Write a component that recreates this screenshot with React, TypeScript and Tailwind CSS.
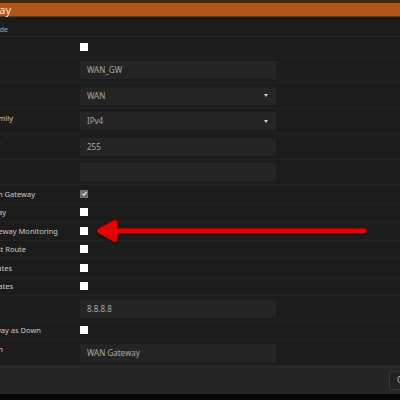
import { useState } from 'react'

type Field =
  | { kind: 'check'; label: string; end: string; checked?: boolean; h?: string }
  | { kind: 'input'; label: string; end: string; value: string }
  | { kind: 'select'; label: string; end: string; value: string }

// `end` is the width of the label box; the label text is right-aligned in it
// and runs off the left edge of the dialog, which is clipped by the viewport.
const fields: Field[] = [
  { kind: 'check', label: 'Disabled', end: 'w-[0px]', h: 'h-[20.5px]' },
  { kind: 'input', label: 'Name', end: 'w-[0px]', value: 'WAN_GW' },
  { kind: 'select', label: 'Interface', end: 'w-[0px]', value: 'WAN' },
  { kind: 'select', label: 'Address Family', end: 'w-[13px]', value: 'IPv4' },
  { kind: 'input', label: 'Priority', end: 'w-[0px]', value: '255' },
  { kind: 'input', label: 'IP Address', end: 'w-[0px]', value: '' },
  { kind: 'check', label: 'Upstream Gateway', end: 'w-[35px]', checked: true },
  { kind: 'check', label: 'Far Gateway', end: 'w-[6px]' },
  { kind: 'check', label: 'Disable Gateway Monitoring', end: 'w-[58px]' },
  { kind: 'check', label: 'Disable Host Route', end: 'w-[26px]' },
  { kind: 'check', label: 'Failover States', end: 'w-[12px]' },
  { kind: 'check', label: 'Failback States', end: 'w-[13px]' },
  { kind: 'input', label: 'Monitor IP', end: 'w-[0px]', value: '8.8.8.8' },
  { kind: 'check', label: 'Mark Gateway as Down', end: 'w-[41px]' },
  { kind: 'input', label: 'Description', end: 'w-[3px]', value: 'WAN Gateway' },
]

function Checkbox({ checked }: { checked?: boolean }) {
  if (checked) {
    return (
      <span className="flex h-[8px] w-[8px] items-center justify-center bg-[#6e6e6e]">
        <svg viewBox="0 0 10 10" className="h-[7px] w-[7px]">
          <path d="M2 5.2 L4.2 7.3 L8 2.8" fill="none" stroke="#e8e8e8" strokeWidth="1.6" />
        </svg>
      </span>
    )
  }
  return <span className="block h-[8px] w-[8px] bg-white" />
}

function Row({ field }: { field: Field }) {
  const isCheck = field.kind === 'check'
  const height = field.kind === 'check' ? field.h ?? 'h-[18.5px]' : 'h-[25.5px]'
  return (
    <div className={`flex border-b border-[#232323] ${height} ${isCheck ? 'items-center' : 'items-start'}`}>
      <div className={`w-[80px] shrink-0 ${isCheck ? '' : 'pt-[4px]'}`}>
        <div className={`flex justify-end whitespace-nowrap text-[7.5px] leading-[10px] text-[#cacaca] ${field.end}`}>
          {field.label}
        </div>
      </div>
      {isCheck ? (
        <Checkbox checked={field.checked} />
      ) : (
        <div className="mt-[3.5px] flex h-[18px] w-[196px] items-center justify-between bg-[#242424] pl-[7px] pr-[8px] text-[8px] text-[#a9a9a9]">
          <span>{field.value}</span>
          {field.kind === 'select' && (
            <span className="h-0 w-0 border-x-[2.5px] border-t-[3px] border-x-transparent border-t-[#d0d0d0]" />
          )}
        </div>
      )}
    </div>
  )
}

export default function App() {
  const [advanced] = useState(false)

  return (
    <div className="relative h-[400px] w-[400px] overflow-hidden bg-[#050505] font-['Noto_Sans',sans-serif]">
      {/* page behind the dialog */}
      <div className="h-[3px] bg-[#3d2b16]" />

      {/* dialog header */}
      <div className="flex h-[14px] items-center border-b border-[#6b3510] bg-[#b0561a]">
        <div className="flex w-[11px] justify-end whitespace-nowrap text-[11px] leading-none text-[#f2e6dc]">
          Edit Gateway
        </div>
      </div>

      {/* dialog body */}
      <div className="bg-[#1c1c1c]">
        <div className="flex h-[20px] items-end border-b border-[#262626] pb-[1px]">
          <div className="flex w-[8px] justify-end whitespace-nowrap text-[7px] leading-[10px] text-[#a8a8a8]">
            {advanced ? 'basic mode' : 'advanced mode'}
          </div>
        </div>
        {fields.map((f) => (
          <Row key={f.label} field={f} />
        ))}
      </div>

      {/* dialog footer */}
      <div className="flex h-[28px] items-center justify-end border-t border-[#2b2b2b] bg-[#252525]">
        <button className="-mr-[30px] h-[19px] rounded-[2px] border border-[#363636] bg-[#222] px-[7px] text-[8px] text-[#c0c0c0]">
          Cancel
        </button>
      </div>

      {/* annotation arrow */}
      <svg className="absolute left-0 top-0 h-[400px] w-[400px]" viewBox="0 0 400 400">
        <g stroke="#3a0000" strokeWidth="6.5" strokeLinecap="round" strokeLinejoin="round" fill="#3a0000" opacity="0.5">
          <line x1="106" y1="232" x2="365" y2="232" />
          <path d="M115 223 L99 232 L115 241 Z" />
        </g>
        <g stroke="#e60000" strokeWidth="5" strokeLinecap="round" strokeLinejoin="round" fill="#e60000">
          <line x1="106" y1="231" x2="364" y2="231" />
          <path d="M115 222.5 L99.5 231 L115 239.5 Z" />
        </g>
      </svg>
    </div>
  )
}
